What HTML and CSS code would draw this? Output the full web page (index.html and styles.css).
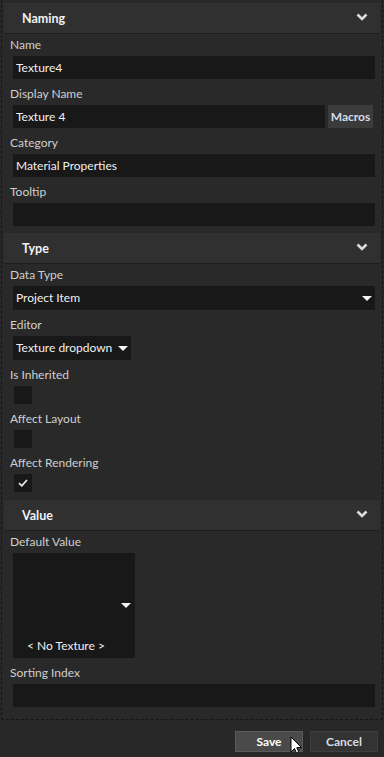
FILE: index.html
```html
<!DOCTYPE html>
<html>
<head>
<meta charset="utf-8">
<link rel="stylesheet" href="styles.css">
</head>
<body>
<div class="panel">
  <section class="group">
    <div class="group-head"><span class="title">Naming</span><svg class="chev" width="12" height="8" viewBox="0 0 12 8"><path d="M1.5 1.5 L6 6 L10.5 1.5" fill="none" stroke="#dcdcdc" stroke-width="2.6"/></svg></div>
    <div class="group-body">
      <div class="field"><div class="label">Name</div><div class="input">Texture4</div></div>
      <div class="field"><div class="label">Display Name</div>
        <div class="row"><div class="input grow">Texture 4</div><div class="btn-macros">Macros</div></div>
      </div>
      <div class="field"><div class="label">Category</div><div class="input">Material Properties</div></div>
      <div class="field"><div class="label">Tooltip</div><div class="input"></div></div>
    </div>
  </section>
  <section class="group">
    <div class="group-head"><span class="title">Type</span><svg class="chev" width="12" height="8" viewBox="0 0 12 8"><path d="M1.5 1.5 L6 6 L10.5 1.5" fill="none" stroke="#dcdcdc" stroke-width="2.6"/></svg></div>
    <div class="group-body">
      <div class="field"><div class="label">Data Type</div><div class="input select">Project Item<span class="tri"></span></div></div>
      <div class="field"><div class="label">Editor</div><div class="input select small">Texture dropdown<span class="tri"></span></div></div>
      <div class="field"><div class="label">Is Inherited</div><div class="check"></div></div>
      <div class="field"><div class="label">Affect Layout</div><div class="check"></div></div>
      <div class="field"><div class="label">Affect Rendering</div><div class="check"><svg width="10" height="8" viewBox="0 0 10 8"><path d="M1 4.2 L3.8 6.8 L9 1" fill="none" stroke="#e8e8e8" stroke-width="1.8"/></svg></div></div>
    </div>
  </section>
  <section class="group last">
    <div class="group-head"><span class="title">Value</span><svg class="chev" width="12" height="8" viewBox="0 0 12 8"><path d="M1.5 1.5 L6 6 L10.5 1.5" fill="none" stroke="#dcdcdc" stroke-width="2.6"/></svg></div>
    <div class="group-body">
      <div class="field"><div class="label">Default Value</div>
        <div class="texture"><span class="tri tex-tri"></span><span class="tex-name">&lt; No Texture &gt;</span></div>
      </div>
      <div class="field"><div class="label">Sorting Index</div><div class="input"></div></div>
    </div>
  </section>
</div>
<div class="footer">
  <div class="btn save">Save
    <svg class="cursor" width="13" height="20" viewBox="0 0 13 20"><path d="M1 1 L1 16 L4.5 12.5 L7 18.5 L9.3 17.5 L6.8 11.6 L11.5 11.6 Z" fill="#ffffff" stroke="#000" stroke-width="1"/></svg>
  </div>
  <div class="btn cancel">Cancel</div>
</div>
</body>
</html>
```
FILE: styles.css
```css
html, body {
  margin: 0;
  padding: 0;
  background: #282828;
  font-family: Lato, "Open Sans", sans-serif;
  font-size: 12px;
  color: #c8c8c8;
}
.panel {
  margin: 0 1px;
  height: 720px;
  box-sizing: border-box;
  padding: 3px 2px 0 2px;
  border-left: 1px dashed #161616;
  border-right: 1px dashed #161616;
  border-bottom: 1px dashed #161616;
  background: #292929;
}
.group-head {
  height: 30px;
  background: #303030;
  border-bottom: 1px solid #1d1d1d;
  display: flex;
  align-items: center;
  justify-content: space-between;
  padding: 0 12px 0 18px;
}
.title {
  font-weight: 700;
  color: #f2f2f2;
  font-size: 12.5px;
}
.chev { display: block; margin-top: -2px; }
.group-body {
  padding: 2px 5px 7px 6px;
  display: flex;
  flex-direction: column;
  gap: 6px;
}
.group:nth-child(2) .group-body { padding-bottom: 8px; }
.group.last .group-body { padding-bottom: 0; }
.label {
  line-height: 18px;
  margin-bottom: 2px;
  color: #cfcfcf;
}
.input {
  margin-left: 3px;
  height: 23px;
  background: #181818;
  color: #f0f0f0;
  line-height: 23px;
  padding-left: 3px;
  box-sizing: border-box;
  position: relative;
}
.row {
  display: flex;
  gap: 3px;
}
.grow { flex: 1; }
.btn-macros {
  width: 45px;
  height: 23px;
  margin-right: 2px;
  background: #3b3b3b;
  color: #d5dbe8;
  font-weight: 700;
  text-align: center;
  line-height: 23px;
  font-size: 12px;
}
.select { height: 24px; line-height: 24px; }
.select.small { width: 118px; }
.tri {
  position: absolute;
  right: 3px;
  top: 10px;
  width: 0;
  height: 0;
  border-left: 5px solid transparent;
  border-right: 5px solid transparent;
  border-top: 5px solid #f4f4f4;
}
.select.small .tri { right: 3px; }
.check {
  margin-left: 4px;
  width: 18px;
  height: 18px;
  background: #181818;
  display: flex;
  align-items: center;
  justify-content: center;
}
.texture {
  margin-left: 3px;
  width: 122px;
  height: 105px;
  background: #181818;
  position: relative;
  display: flex;
  flex-direction: column;
  justify-content: flex-end;
}
.tex-tri { top: 50px; right: 4px; }
.tex-name {
  color: #f0f0f0;
  padding-left: 14px;
  padding-bottom: 5px;
}
.footer {
  display: flex;
  justify-content: flex-end;
  gap: 7px;
  padding: 11px 6px 0 0;
}
.btn {
  width: 68px;
  height: 21px;
  box-sizing: border-box;
  text-align: center;
  line-height: 19px;
  font-weight: 700;
  position: relative;
}
.save {
  background: #4a4a4a;
  border: 1px solid #5a5a5a;
  color: #ffffff;
}
.cancel {
  background: #333333;
  border: 1px solid #3e3e3e;
  color: #d8dce4;
}
.cursor {
  position: absolute;
  left: 54px;
  top: 4px;
}
```
